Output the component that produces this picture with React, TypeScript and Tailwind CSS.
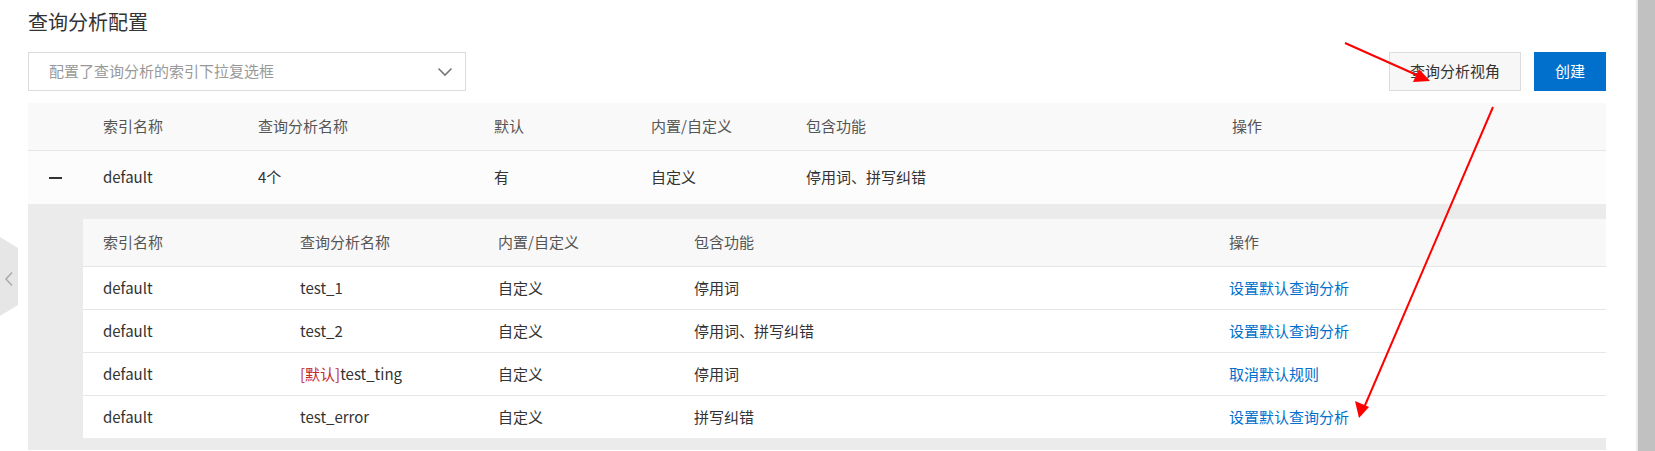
import React from 'react';

const outerCols = 'grid grid-cols-[75px_155px_236px_157px_155px_426px_1fr] items-center';
const innerCols = 'grid grid-cols-[197px_198px_196px_535px_1fr] items-center pl-[20px]';

const rows = [
  { index: 'default', name: 'test_1', isDefault: false, type: '自定义', features: '停用词', action: '设置默认查询分析' },
  { index: 'default', name: 'test_2', isDefault: false, type: '自定义', features: '停用词、拼写纠错', action: '设置默认查询分析' },
  { index: 'default', name: 'test_ting', isDefault: true, type: '自定义', features: '停用词', action: '取消默认规则' },
  { index: 'default', name: 'test_error', isDefault: false, type: '自定义', features: '拼写纠错', action: '设置默认查询分析' },
];

export default function App() {
  return (
    <div
      className="relative w-[1655px] h-[451px] overflow-hidden bg-white flex text-[#333]"
      style={{ fontFamily: '"Noto Sans CJK SC", "Noto Sans", sans-serif' }}
    >
      <div className="flex-1 pl-[28px] pr-[30px] pt-[8px]">
        {/* Title */}
        <h1 className="text-[20px] leading-[28px] font-normal text-[#333]">查询分析配置</h1>

        {/* Toolbar */}
        <div className="mt-[16px] flex items-center justify-between h-[39px]">
          <div className="w-[438px] h-[39px] border border-[#dcdcdc] bg-white flex items-center justify-between pl-[20px] pr-[12px]">
            <span className="text-[15px] text-[#999]">配置了查询分析的索引下拉复选框</span>
            <svg width="16" height="10" viewBox="0 0 16 10" fill="none">
              <polyline points="1.5,1.5 8,8 14.5,1.5" stroke="#777" strokeWidth="1.6" />
            </svg>
          </div>
          <div className="flex items-center gap-[13px]">
            <button className="w-[132px] h-[39px] border border-[#dcdcdc] bg-[#f7f7f7] text-[15px] text-[#333]">
              查询分析视角
            </button>
            <button className="w-[72px] h-[39px] bg-[#0070cc] text-[15px] text-white">创建</button>
          </div>
        </div>

        {/* Outer table */}
        <div className="mt-[12px] text-[15px]">
          <div className={`${outerCols} h-[48px] bg-[#f9f9f9] border-b border-[#e6e6e6] text-[#555]`}>
            <div />
            <div>索引名称</div>
            <div>查询分析名称</div>
            <div>默认</div>
            <div>内置/自定义</div>
            <div>包含功能</div>
            <div>操作</div>
          </div>
          <div className={`${outerCols} h-[53px] bg-[#fcfcfc]`}>
            <div className="pl-[21px]">
              <div className="w-[13px] h-[2px] bg-[#333]" />
            </div>
            <div>default</div>
            <div>4个</div>
            <div>有</div>
            <div>自定义</div>
            <div>停用词、拼写纠错</div>
            <div />
          </div>

          {/* Expanded area */}
          <div className="bg-[#ebebeb] pl-[55px] pt-[15px] pb-[12px]">
            <div className="bg-white">
              <div className={`${innerCols} h-[47px] bg-[#f8f8f8] text-[#555]`}>
                <div>索引名称</div>
                <div>查询分析名称</div>
                <div>内置/自定义</div>
                <div>包含功能</div>
                <div>操作</div>
              </div>
              {rows.map((r) => (
                <div key={r.name} className={`${innerCols} h-[43px] border-t border-[#e6e6e6]`}>
                  <div>{r.index}</div>
                  <div>
                    {r.isDefault && <span className="text-[#c4262b]">[默认]</span>}
                    {r.name}
                  </div>
                  <div>{r.type}</div>
                  <div>{r.features}</div>
                  <div className="text-[#0070cc]">{r.action}</div>
                </div>
              ))}
            </div>
          </div>
        </div>
      </div>

      {/* Scrollbar */}
      <div className="w-[19px] h-full border-l-2 border-[#ececec] bg-[#c1c1c1]" />

      {/* Left side collapse tab */}
      <div className="absolute left-0 top-[237px] w-[18px] h-[79px] bg-[#e6e6e6] [clip-path:polygon(0_0,100%_11px,100%_calc(100%-11px),0_100%)] flex items-center justify-center">
        <svg width="10" height="16" viewBox="0 0 10 16" fill="none" className="mt-[4px]">
          <polyline points="8,1.5 2,8 8,14.5" stroke="#aaa" strokeWidth="1.5" />
        </svg>
      </div>

      {/* Annotation arrows */}
      <svg className="absolute inset-0 pointer-events-none" width="1655" height="451">
        <line x1="1345" y1="43" x2="1428" y2="80" stroke="#ff0000" strokeWidth="2" />
        <polygon points="1430,81 1413,82 1419,69" fill="#ff0000" />
        <line x1="1493" y1="107" x2="1363" y2="410" stroke="#ff0000" strokeWidth="2" />
        <polygon points="1359,418 1355,401 1369,407" fill="#ff0000" />
      </svg>
    </div>
  );
}
